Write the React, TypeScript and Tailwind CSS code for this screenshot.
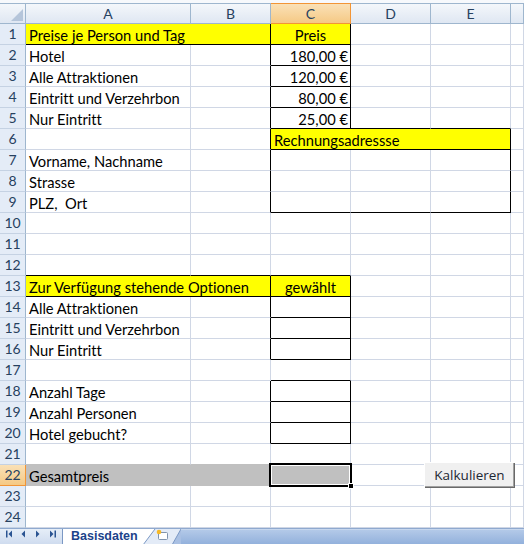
import React from "react";

type Fill = "y" | "g" | null;

const COLS = ["A", "B", "C", "D", "E", ""];

function fillAt(r: number, c: number): Fill {
  if ((r === 1 || r === 13) && c <= 2) return "y";
  if (r === 6 && c >= 2 && c <= 4) return "y";
  if (r === 22 && c <= 2) return "g";
  return null;
}

// black cell borders, keyed "row:col"
const blackR = new Set<string>();
const blackB = new Set<string>();
function box(r1: number, c1: number, r2: number, c2: number) {
  for (let c = c1; c <= c2; c++) {
    blackB.add(`${r1 - 1}:${c}`);
    blackB.add(`${r2}:${c}`);
  }
  for (let r = r1; r <= r2; r++) {
    if (c1 > 0) blackR.add(`${r}:${c1 - 1}`);
    blackR.add(`${r}:${c2}`);
  }
}
box(1, 2, 1, 2);
[2, 3, 4, 5, 14, 15, 16, 18, 19, 20].forEach((r) => box(r, 2, r, 2));
box(6, 2, 6, 4);
box(7, 2, 9, 4);
box(13, 2, 13, 2);
["1:0", "1:1", "12:0", "12:1", "13:0", "13:1"].forEach((k) => blackB.add(k));

const SPANS: Record<number, [number, number][]> = {
  1: [[0, 2]],
  6: [[2, 3]],
  13: [[0, 2]],
  22: [[0, 2]],
};

const TEXT: Record<string, { t: string; a: "l" | "c" | "r" }> = {
  "1:0": { t: "Preise je Person und Tag", a: "l" },
  "1:2": { t: "Preis", a: "c" },
  "2:0": { t: "Hotel", a: "l" },
  "2:2": { t: "180,00 €", a: "r" },
  "3:0": { t: "Alle Attraktionen", a: "l" },
  "3:2": { t: "120,00 €", a: "r" },
  "4:0": { t: "Eintritt und Verzehrbon", a: "l" },
  "4:2": { t: "80,00 €", a: "r" },
  "5:0": { t: "Nur Eintritt", a: "l" },
  "5:2": { t: "25,00 €", a: "r" },
  "6:2": { t: "Rechnungsadressse", a: "l" },
  "7:0": { t: "Vorname, Nachname", a: "l" },
  "8:0": { t: "Strasse", a: "l" },
  "9:0": { t: "PLZ,  Ort", a: "l" },
  "13:0": { t: "Zur Verfügung stehende Optionen", a: "l" },
  "13:2": { t: "gewählt", a: "c" },
  "14:0": { t: "Alle Attraktionen", a: "l" },
  "15:0": { t: "Eintritt und Verzehrbon", a: "l" },
  "16:0": { t: "Nur Eintritt", a: "l" },
  "18:0": { t: "Anzahl Tage", a: "l" },
  "19:0": { t: "Anzahl Personen", a: "l" },
  "20:0": { t: "Hotel gebucht?", a: "l" },
  "22:0": { t: "Gesamtpreis", a: "l" },
};

const R_CLS = {
  black: "border-r-black",
  grid: "border-r-[#d0d7e5]",
  y: "border-r-[#ffff00]",
  g: "border-r-[#c0c0c0]",
};
const B_CLS = {
  black: "border-b-black",
  grid: "border-b-[#d0d7e5]",
  y: "border-b-[#ffff00]",
  g: "border-b-[#c0c0c0]",
};
const BG_CLS = { y: "bg-[#ffff00]", g: "bg-[#c0c0c0]" };
const SPAN_CLS: Record<number, string> = { 1: "", 2: "col-span-2", 3: "col-span-3" };
const ALIGN_CLS = { l: "justify-start pl-[3px]", c: "justify-center", r: "justify-end pr-[2px]" };

function rightColor(r: number, c: number): keyof typeof R_CLS {
  if (blackR.has(`${r}:${c}`)) return "black";
  const f = fillAt(r, c) ?? (c < 5 ? fillAt(r, c + 1) : null);
  return f ?? "grid";
}
function bottomColor(r: number, c: number): keyof typeof B_CLS {
  if (blackB.has(`${r}:${c}`)) return "black";
  const f = fillAt(r, c) ?? fillAt(r + 1, c);
  return f ?? "grid";
}

function rowCells(r: number) {
  const cells: { c: number; span: number }[] = [];
  const spans = SPANS[r] ?? [];
  let c = 0;
  while (c < 6) {
    const s = spans.find(([start]) => start === c);
    const span = s ? s[1] : 1;
    cells.push({ c, span });
    c += span;
  }
  return cells;
}

function NavArrows() {
  const col = "#2a5492";
  return (
    <svg width="62" height="16" viewBox="0 0 62 16">
      <rect x="6" y="1.5" width="1.5" height="7" fill={col} />
      <polygon points="12,1.5 12,8.5 8.5,5" fill={col} />
      <polygon points="25,1.5 25,8.5 21.5,5" fill={col} />
      <polygon points="36,1.5 36,8.5 39.5,5" fill={col} />
      <polygon points="50,1.5 50,8.5 53.5,5" fill={col} />
      <rect x="54.5" y="1.5" width="1.5" height="7" fill={col} />
    </svg>
  );
}

export default function App() {
  const rows = Array.from({ length: 24 }, (_, i) => i + 1);
  return (
    <div className="relative w-[524px] h-[544px] overflow-hidden bg-white font-['Lato',sans-serif] text-[14.7px] text-black [font-variant-ligatures:none]">
      <div className="h-[3px] bg-[#f7f9fc]" />

      {/* Column headers */}
      <div className="grid grid-cols-[26px_165px_80px_80px_80px_80px_13px] h-[21px]">
        <div className="relative border-t border-b border-r border-[#9eb6ce] bg-gradient-to-b from-[#f4f7fb] to-[#dfe7f2]">
          <svg className="absolute right-[2px] bottom-[2px]" width="12" height="12" viewBox="0 0 12 12">
            <polygon points="12,0 12,12 0,12" fill="#b5c5da" />
          </svg>
        </div>
        {COLS.map((l, i) => (
          <div
            key={i}
            className={
              i === 2
                ? "flex items-center justify-center border-t border-b border-r border-t-[#f29536] border-b-[#f29536] border-r-[#f29536] bg-gradient-to-b from-[#fae1b7] to-[#f5c984] text-[#27415f] text-[14px] leading-none"
                : "flex items-center justify-center border-t border-b border-r border-[#9eb6ce] bg-gradient-to-b from-[#f4f7fb] to-[#dfe7f2] text-[#27415f] text-[14px] leading-none"
            }
          >
            {l}
          </div>
        ))}
      </div>

      {/* Sheet grid */}
      <div className="grid grid-cols-[26px_165px_80px_80px_80px_80px_13px] auto-rows-[21px]">
        {rows.map((r) => (
          <React.Fragment key={r}>
            <div
              className={
                r === 22
                  ? "flex items-center justify-center border-r border-b border-r-[#f29536] border-b-[#f29536] bg-gradient-to-b from-[#fae1b7] to-[#f5c984] text-[#27415f] text-[14px] leading-none"
                  : "flex items-center justify-center border-r border-b border-r-[#9eb6ce] border-b-[#c5d2e3] bg-[#e4ecf7] text-[#27415f] text-[14px] leading-none"
              }
            >
              {r}
            </div>
            {rowCells(r).map(({ c, span }) => {
              const last = c + span - 1;
              const f = fillAt(r, c);
              const txt = TEXT[`${r}:${c}`];
              const isSel = r === 22 && c === 2;
              return (
                <div
                  key={c}
                  className={[
                    "relative flex items-end whitespace-pre leading-[18px] border-r border-b",
                    SPAN_CLS[span],
                    R_CLS[rightColor(r, last)],
                    B_CLS[bottomColor(r, c)],
                    f ? BG_CLS[f] : "",
                    txt ? ALIGN_CLS[txt.a] : "",
                  ].join(" ")}
                >
                  {txt?.t}
                  {isSel && (
                    <div className="absolute -left-[2px] -top-[2px] z-10 w-[83px] h-[24px] border-2 border-black shadow-[inset_0_0_0_1px_white]">
                      <div className="absolute left-[77px] top-[18px] w-[6px] h-[6px] bg-black border border-white" />
                    </div>
                  )}
                </div>
              );
            })}
          </React.Fragment>
        ))}
      </div>

      {/* Kalkulieren button */}
      <button className="absolute left-[424px] top-[462px] w-[90px] h-[25px] bg-[#f0f0f0] border-t border-l border-t-white border-l-white shadow-[inset_-1px_-1px_0_#a0a0a0,1px_1px_0_#696969] font-['Open_Sans',sans-serif] text-[13.5px] text-[#1d2733] pt-[1px]">
        Kalkulieren
      </button>

      {/* Sheet tabs */}
      <div className="flex h-[16px] border-t border-[#8fa9cf]">
        <div className="w-[62px] bg-gradient-to-b from-[#e6eef8] to-[#cfdcef]">
          <NavArrows />
        </div>
        <div className="w-[81px] bg-white border-l border-[#7b98c4] pl-[8px] font-['Liberation_Sans',sans-serif] font-bold text-[12.5px] leading-[14px] text-[#1c438a] whitespace-nowrap">
          Basisdaten
        </div>
        <svg width="38" height="16" viewBox="0 0 38 16" className="shrink-0">
          <rect x="0" y="0" width="38" height="16" fill="#a9c0e3" />
          <polygon points="0,0 38,0 29,16 0,16" fill="#e3ebf7" />
          <polygon points="0,0 12,0 0,16" fill="#ffffff" />
          <line x1="12" y1="0" x2="0" y2="16" stroke="#7b98c4" strokeWidth="1" />
          <line x1="38" y1="0" x2="29" y2="16" stroke="#7b98c4" strokeWidth="1" />
          <rect x="15.5" y="3.5" width="9" height="7" rx="1" fill="#ffffff" stroke="#7f93ad" />
          <circle cx="16" cy="3" r="2.3" fill="#f6b928" />
        </svg>
        <div className="flex-1 bg-gradient-to-b from-[#b3c9e8] to-[#93b1dc] border-t border-[#c7d7ee]" />
      </div>
    </div>
  );
}
